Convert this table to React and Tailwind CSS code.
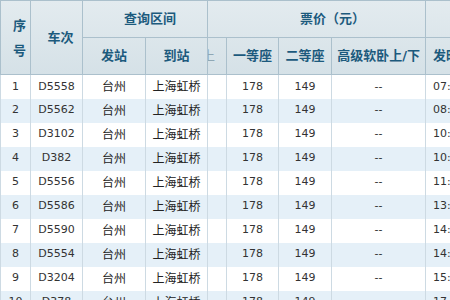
import React from 'react';

const rows = [
  ['1', 'D5558', '07:55'],
  ['2', 'D5562', '08:15'],
  ['3', 'D3102', '10:05'],
  ['4', 'D382', '10:35'],
  ['5', 'D5556', '11:50'],
  ['6', 'D5586', '13:05'],
  ['7', 'D5590', '14:10'],
  ['8', 'D5554', '14:25'],
  ['9', 'D3204', '15:05'],
  ['10', 'D378', '17:10'],
];

const th = 'border border-[#abc0cc] text-center font-bold text-[13px] text-[#1c5a7d] p-0 align-middle';
const td = 'border-x border-[#cddae3] text-center p-0 h-[24px] align-middle';
const num = 'text-[11px] text-[#333]';
const cjk = 'text-[12px] text-[#222]';

export default function App() {
  return (
    <div className="w-[450px] h-[300px] overflow-hidden bg-white" style={{ fontFamily: '"DejaVu Sans", "Noto Sans CJK SC", sans-serif' }}>
      <table className="table-fixed border-collapse w-[475px]">
        <colgroup>
          <col className="w-[30px]" />
          <col className="w-[52px]" />
          <col className="w-[63px]" />
          <col className="w-[62px]" />
          <col className="w-[19px]" />
          <col className="w-[52px]" />
          <col className="w-[53px]" />
          <col className="w-[94px]" />
          <col className="w-[50px]" />
        </colgroup>
        <thead className="bg-gradient-to-b from-[#e3ebef] to-[#d5e1e7]">
          <tr className="h-[37px]">
            <th rowSpan={2} className={`${th} pl-[8px] leading-[25px]`}>序<br />号</th>
            <th rowSpan={2} className={`${th} pl-[8px]`}>车次</th>
            <th colSpan={2} className={`${th} pl-[10px]`}>查询区间</th>
            <th colSpan={4} className={`${th} pl-[32px]`}>票价（元）</th>
            <th className={th}></th>
          </tr>
          <tr className="h-[37px]">
            <th className={th}>发站</th>
            <th className={th}>到站</th>
            <th className={`${th} overflow-hidden text-left`}>
              <span className="block -ml-[6px] text-[#8fa7b4] font-normal">上</span>
            </th>
            <th className={th}>一等座</th>
            <th className={th}>二等座</th>
            <th className={`${th} whitespace-nowrap`}>高级软卧上/下</th>
            <th className={`${th} text-left pl-[7px] whitespace-nowrap`}>发时</th>
          </tr>
        </thead>
        <tbody>
          {rows.map(([n, code, time], i) => (
            <tr key={n} className={i % 2 ? 'bg-[#e5f0f8]' : 'bg-white'}>
              <td className={`${td} ${num}`}>{n}</td>
              <td className={`${td} ${num}`}>{code}</td>
              <td className={`${td} ${cjk}`}>台州</td>
              <td className={`${td} ${cjk}`}>上海虹桥</td>
              <td className={td}></td>
              <td className={`${td} ${num}`}>178</td>
              <td className={`${td} ${num}`}>149</td>
              <td className={`${td} ${num}`}>--</td>
              <td className={`${td} ${num} text-left pl-[7px]`}>{time}</td>
            </tr>
          ))}
        </tbody>
      </table>
    </div>
  );
}
